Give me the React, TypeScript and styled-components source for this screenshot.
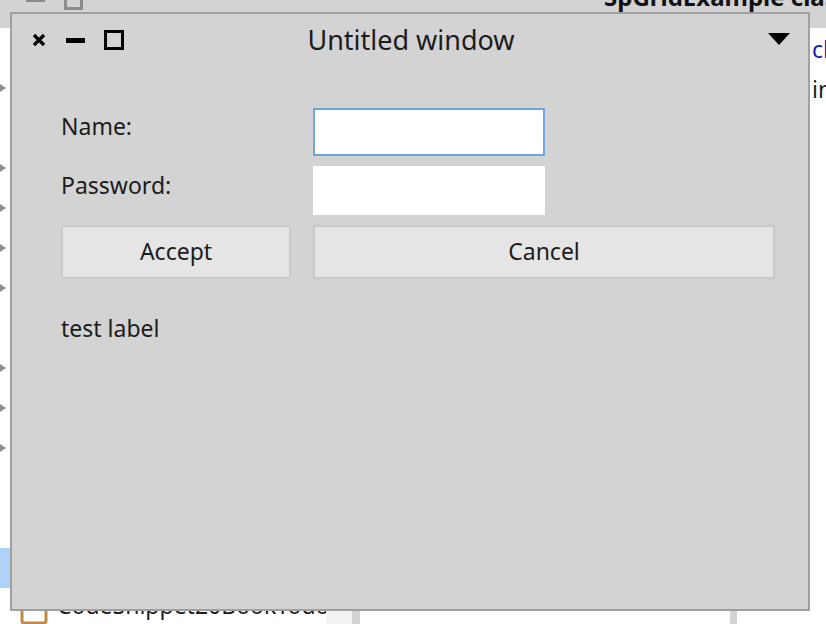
import React from 'react';
import styled, { createGlobalStyle } from 'styled-components';

const GlobalStyle = createGlobalStyle`
  html, body {
    margin: 0;
    padding: 0;
    background: #ffffff;
  }
  * {
    box-sizing: border-box;
  }
`;

const FONT = `"Noto Sans", "Open Sans", sans-serif`;

const Desktop = styled.div`
  position: relative;
  width: 826px;
  height: 624px;
  overflow: hidden;
  background: #ffffff;
  font-family: ${FONT};
  color: #1c1c1c;
`;

/* ---------- window behind ---------- */

const BackWindow = styled.div`
  position: absolute;
  left: -30px;
  top: -27px;
  width: 1100px;
  height: 700px;
  background: #d3d3d3;
  display: flex;
  flex-direction: column;
`;

const BackTitleBar = styled.div`
  height: 55px;
  display: flex;
  align-items: center;
  padding-left: 56px;
  gap: 19px;
`;

const BackTitle = styled.div`
  margin-left: 502px;
  font-weight: 700;
  font-size: 24px;
  white-space: nowrap;
  color: #111;
  margin-top: -8px;
`;

const BackBody = styled.div`
  flex: 1;
  display: flex;
`;

const ListPane = styled.div`
  width: 356px;
  flex-shrink: 0;
  background: #ffffff;
  display: flex;
  flex-direction: column;
  overflow: hidden;
`;

const ListRow = styled.div<{ $selected?: boolean }>`
  height: 40px;
  flex-shrink: 0;
  display: flex;
  align-items: center;
  padding-left: 30px;
  background: ${({ $selected }) => ($selected ? '#aed3f7' : 'transparent')};
  font-size: 23px;
  white-space: nowrap;
`;

const RowText = styled.span`
  margin-top: -7px;
`;

const TreeArrow = styled.span<{ $hidden?: boolean }>`
  flex-shrink: 0;
  width: 0;
  height: 0;
  border-top: 4px solid transparent;
  border-bottom: 4px solid transparent;
  border-left: 6px solid ${({ $hidden }) => ($hidden ? 'transparent' : '#909090')};
  margin-right: 14px;
`;

const ClassIcon = styled.svg`
  flex-shrink: 0;
  width: 28px;
  height: 26px;
  margin-right: 9px;
  margin-top: 8px;
`;

const ScrollTrack = styled.div`
  width: 26px;
  flex-shrink: 0;
  background: #f3f3f3;
`;

const Splitter = styled.div<{ $w: number }>`
  width: ${({ $w }) => $w}px;
  flex-shrink: 0;
  background: #d3d3d3;
`;

const CodePane = styled.div<{ $w?: number }>`
  width: ${({ $w }) => ($w ? `${$w}px` : 'auto')};
  flex: ${({ $w }) => ($w ? '0 0 auto' : '1')};
  background: #ffffff;
  padding: 1px 0 0 75px;
  font-size: 23px;
  line-height: 40px;
  white-space: nowrap;
`;

const Keyword = styled.div`
  color: #1b1bb0;
`;

const BackMinus = styled.span`
  width: 19px;
  height: 3px;
  background: #8c8c8c;
`;

const BackSquare = styled.span`
  width: 19px;
  height: 19px;
  border: 3px solid #8c8c8c;
`;

/* ---------- front window ---------- */

const Window = styled.div`
  position: absolute;
  left: 10px;
  top: 12px;
  width: 800px;
  height: 599px;
  border: 2px solid #a0a0a0;
  background: #d3d3d3;
  display: flex;
  flex-direction: column;
`;

const TitleBar = styled.div`
  height: 52px;
  display: grid;
  grid-template-columns: 1fr auto 1fr;
  align-items: center;
  padding: 0 18px 0 20px;
`;

const Controls = styled.div`
  display: flex;
  align-items: center;
`;

const CloseIcon = styled.svg`
  width: 14px;
  height: 14px;
  margin-right: 20px;
`;

const MinIcon = styled.span`
  width: 19px;
  height: 5px;
  background: #000;
  margin-right: 19px;
`;

const MaxIcon = styled.span`
  width: 20px;
  height: 20px;
  border: 3px solid #000;
`;

const Title = styled.div`
  font-size: 27px;
  color: #1c1c1c;
  margin-top: -2px;
  white-space: nowrap;
`;

const MenuArrow = styled.span`
  justify-self: end;
  width: 0;
  height: 0;
  border-left: 11px solid transparent;
  border-right: 11px solid transparent;
  border-top: 12px solid #000;
  margin-top: -2px;
`;

const Content = styled.div`
  padding: 42px 0 0 49px;
`;

const Grid = styled.div`
  display: grid;
  grid-template-columns: 230px 232px 208px;
  grid-template-rows: 48px 49px 54px;
  column-gap: 22px;
  row-gap: 10px;
`;

const FieldLabel = styled.div`
  align-self: center;
  padding-bottom: 12px;
  font-size: 23px;
`;

const TextInput = styled.input<{ $focused?: boolean }>`
  width: 100%;
  height: 100%;
  margin: 0;
  border: 2px solid ${({ $focused }) => ($focused ? '#70a6df' : '#ffffff')};
  background: #ffffff;
  outline: none;
  font-family: ${FONT};
  font-size: 22px;
  padding: 0 8px;
`;

const Button = styled.button<{ $span?: number }>`
  grid-column: span ${({ $span }) => $span ?? 1};
  margin: 0;
  border: 2px solid #c9c9c9;
  background: #e5e5e5;
  font-family: ${FONT};
  font-size: 23px;
  color: #1c1c1c;
  cursor: pointer;
  padding: 0 0 2px 0;
`;

const TestLabel = styled.div`
  margin-top: 33px;
  font-size: 23px;
`;

const arrowRows = new Set([1, 3, 4, 5, 6, 8, 9, 10]);

const App: React.FC = () => {
  return (
    <>
      <GlobalStyle />
      <Desktop>
        <BackWindow>
          <BackTitleBar>
            <BackMinus />
            <BackSquare />
            <BackTitle>SpGridExample class</BackTitle>
          </BackTitleBar>
          <BackBody>
            <ListPane>
              {Array.from({ length: 14 }).map((_, i) => (
                <ListRow key={i} $selected={i === 13}>
                  <TreeArrow $hidden={!arrowRows.has(i)} />
                </ListRow>
              ))}
              <ListRow>
                <TreeArrow $hidden />
                <ClassIcon viewBox="0 0 28 26">
                  <rect x="2" y="2" width="24" height="22" rx="2" fill="#fff" stroke="#c08a44" strokeWidth="3" />
                </ClassIcon>
                <RowText>CodeSnippet20BookTodo</RowText>
              </ListRow>
            </ListPane>
            <ScrollTrack />
            <Splitter $w={8} />
            <CodePane $w={370} />
            <Splitter $w={7} />
            <CodePane>
              <Keyword>classSide</Keyword>
              <div>initialize</div>
            </CodePane>
          </BackBody>
        </BackWindow>

        <Window>
          <TitleBar>
            <Controls>
              <CloseIcon viewBox="0 0 14 14">
                <path d="M2 2 L12 12 M12 2 L2 12" stroke="#000" strokeWidth="3.2" />
              </CloseIcon>
              <MinIcon />
              <MaxIcon />
            </Controls>
            <Title>Untitled window</Title>
            <MenuArrow />
          </TitleBar>
          <Content>
            <Grid>
              <FieldLabel>Name:</FieldLabel>
              <TextInput $focused />
              <div />
              <FieldLabel>Password:</FieldLabel>
              <TextInput type="password" />
              <div />
              <Button>Accept</Button>
              <Button $span={2}>Cancel</Button>
            </Grid>
            <TestLabel>test label</TestLabel>
          </Content>
        </Window>
      </Desktop>
    </>
  );
};

export default App;
